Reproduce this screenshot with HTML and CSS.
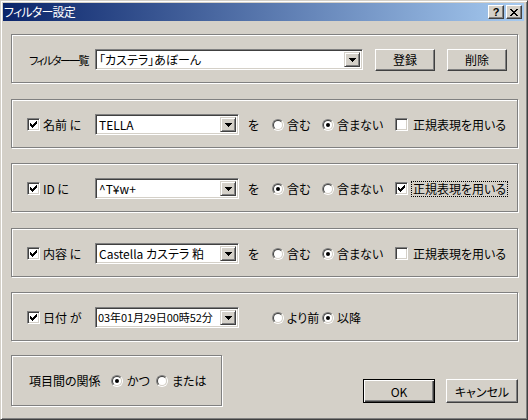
FILE: index.html
```html
<!DOCTYPE html>
<html lang="ja">
<head>
<meta charset="utf-8">
<title>フィルター設定</title>
<link rel="stylesheet" href="styles.css">
</head>
<body>
<div class="window">
  <div class="titlebar">
    <span class="title">フィルター設定</span>
    <span class="capbtn help">?</span>
    <span class="capbtn close"><svg width="8" height="7" viewBox="0 0 8 7"><path d="M0 0h2v1h-2z M6 0h2v1h-2z M1 1h2v1h-2z M5 1h2v1h-2z M2 2h4v1h-4z M3 3h2v1h-2z M2 4h4v1h-4z M1 5h2v1h-2z M5 5h2v1h-2z M0 6h2v1h-2z M6 6h2v1h-2z"/></svg></span>
  </div>
  <div class="client">
    <div class="group g-list">
      <span class="lbl list-lbl">フィルター一覧</span>
      <div class="combo list-combo"><span class="val">「カステラ」あぼーん</span><span class="drop"><svg width="7" height="4" viewBox="0 0 7 4"><path d="M0 0h7v1h-7z M1 1h5v1h-5z M2 2h3v1h-3z M3 3h1v1h-1z"/></svg></span></div>
      <span class="btn reg">登録</span>
      <span class="btn del">削除</span>
    </div>

    <div class="group row g-name">
      <span class="chk"><svg width="11" height="11" viewBox="1 1 11 11"><path d="M9 3h1v1h-1z M8 4h2v1h-2z M3 5h1v1h-1z M7 5h3v1h-3z M3 6h2v1h-2z M6 6h3v1h-3z M3 7h5v1h-5z M4 8h3v1h-3z M5 9h1v1h-1z"/></svg></span>
      <span class="lbl field-lbl">名前 に</span>
      <div class="combo field"><span class="val">TELLA</span><span class="drop"><svg width="7" height="4" viewBox="0 0 7 4"><path d="M0 0h7v1h-7z M1 1h5v1h-5z M2 2h3v1h-3z M3 3h1v1h-1z"/></svg></span></div>
      <span class="wo">を</span>
      <span class="opt o1"><span class="radio"><i></i></span>含む</span>
      <span class="opt o2"><span class="radio on"><i></i></span>含まない</span>
      <span class="chk empty"></span><span class="cap">正規表現を用いる</span>
    </div>

    <div class="group row g-id">
      <span class="chk"><svg width="11" height="11" viewBox="1 1 11 11"><path d="M9 3h1v1h-1z M8 4h2v1h-2z M3 5h1v1h-1z M7 5h3v1h-3z M3 6h2v1h-2z M6 6h3v1h-3z M3 7h5v1h-5z M4 8h3v1h-3z M5 9h1v1h-1z"/></svg></span>
      <span class="lbl field-lbl">ID に</span>
      <div class="combo field"><span class="val">^T¥w+</span><span class="drop"><svg width="7" height="4" viewBox="0 0 7 4"><path d="M0 0h7v1h-7z M1 1h5v1h-5z M2 2h3v1h-3z M3 3h1v1h-1z"/></svg></span></div>
      <span class="wo">を</span>
      <span class="opt o1"><span class="radio on"><i></i></span>含む</span>
      <span class="opt o2"><span class="radio"><i></i></span>含まない</span>
      <span class="chk"><svg width="11" height="11" viewBox="1 1 11 11"><path d="M9 3h1v1h-1z M8 4h2v1h-2z M3 5h1v1h-1z M7 5h3v1h-3z M3 6h2v1h-2z M6 6h3v1h-3z M3 7h5v1h-5z M4 8h3v1h-3z M5 9h1v1h-1z"/></svg></span><span class="cap focus">正規表現を用いる</span>
    </div>

    <div class="group row g-body">
      <span class="chk"><svg width="11" height="11" viewBox="1 1 11 11"><path d="M9 3h1v1h-1z M8 4h2v1h-2z M3 5h1v1h-1z M7 5h3v1h-3z M3 6h2v1h-2z M6 6h3v1h-3z M3 7h5v1h-5z M4 8h3v1h-3z M5 9h1v1h-1z"/></svg></span>
      <span class="lbl field-lbl">内容 に</span>
      <div class="combo field"><span class="val">Castella カステラ 粕</span><span class="drop"><svg width="7" height="4" viewBox="0 0 7 4"><path d="M0 0h7v1h-7z M1 1h5v1h-5z M2 2h3v1h-3z M3 3h1v1h-1z"/></svg></span></div>
      <span class="wo">を</span>
      <span class="opt o1"><span class="radio"><i></i></span>含む</span>
      <span class="opt o2"><span class="radio on"><i></i></span>含まない</span>
      <span class="chk empty"></span><span class="cap">正規表現を用いる</span>
    </div>

    <div class="group row g-date">
      <span class="chk"><svg width="11" height="11" viewBox="1 1 11 11"><path d="M9 3h1v1h-1z M8 4h2v1h-2z M3 5h1v1h-1z M7 5h3v1h-3z M3 6h2v1h-2z M6 6h3v1h-3z M3 7h5v1h-5z M4 8h3v1h-3z M5 9h1v1h-1z"/></svg></span>
      <span class="lbl field-lbl">日付 が</span>
      <div class="combo field date"><span class="val">03年01月29日00時52分</span><span class="drop"><svg width="7" height="4" viewBox="0 0 7 4"><path d="M0 0h7v1h-7z M1 1h5v1h-5z M2 2h3v1h-3z M3 3h1v1h-1z"/></svg></span></div>
      <span class="wo"></span>
      <span class="opt o1"><span class="radio"><i></i></span>より前</span>
      <span class="opt o2"><span class="radio on"><i></i></span>以降</span>
    </div>

    <div class="bottom">
      <div class="group g-rel">
        <span class="lbl rel-lbl">項目間の関係</span>
        <span class="opt r1"><span class="radio on"><i></i></span>かつ</span>
        <span class="opt r2"><span class="radio"><i></i></span>または</span>
      </div>
      <div class="actions">
        <span class="btn dlg default">OK</span>
        <span class="btn dlg">キャンセル</span>
      </div>
    </div>
  </div>
</div>
</body>
</html>
```

FILE: styles.css
```css
* { box-sizing: border-box; }
html, body { margin: 0; padding: 0; }
body {
  width: 528px;
  height: 420px;
  overflow: hidden;
  background: #d4d0c8;
  font-family: "Noto Sans CJK JP", "Noto Sans", sans-serif;
  font-size: 12px;
  font-feature-settings: "palt" 1;
  color: #000;
}
.window {
  width: 528px;
  height: 420px;
  background: #d4d0c8;
  border: 1px solid;
  border-color: #d4d0c8 #404040 #404040 #d4d0c8;
  box-shadow: inset 1px 1px 0 #fff, inset -1px -1px 0 #808080;
  padding: 2px 3px 3px 2px;
  display: flex;
  flex-direction: column;
}
.titlebar {
  height: 18px;
  flex-shrink: 0;
  display: flex;
  align-items: center;
  background: linear-gradient(to right, #0a246a, #a6caf0);
  padding: 0 2px 0 1px;
  color: #fff;
}
.title {
  flex: 1;
  line-height: 18px;
  white-space: nowrap;
  letter-spacing: -0.8px;
}
.capbtn {
  width: 16px;
  height: 14px;
  background: #d4d0c8;
  border: 1px solid;
  border-color: #fff #404040 #404040 #fff;
  box-shadow: inset -1px -1px 0 #808080;
  display: flex;
  align-items: center;
  justify-content: center;
  color: #000;
}
.help {
  margin-right: 2px;
  font-family: "Liberation Sans", sans-serif;
  font-weight: bold;
  font-size: 11px;
  line-height: 12px;
}
.close svg { display: block; margin-left: -1px; }

.client {
  flex: 1;
  display: flex;
  flex-direction: column;
  padding: 13px 0 0 8px;
}
.group {
  flex-shrink: 0;
  width: 507px;
  height: 49px;
  border: 1px solid #808080;
  box-shadow: inset 1px 1px 0 #fff, 1px 1px 0 #fff;
  display: flex;
  align-items: center;
  padding-top: 2px;
  white-space: nowrap;
}
.g-name { margin-top: 16px; }
.g-id { margin-top: 15px; }
.g-body { margin-top: 16px; }
.g-date { margin-top: 15px; }

.g-list { padding-left: 17px; }
.lbl { flex-shrink: 0; }
.list-lbl {
  width: 66px;
  font-size: 11px;
  letter-spacing: -1.6px;
}
.list-combo { width: 268px; }

.combo {
  height: 21px;
  flex-shrink: 0;
  background: #fff;
  border: 1px solid;
  border-color: #808080 #fff #fff #808080;
  box-shadow: inset 1px 1px 0 #404040, inset -1px -1px 0 #d4d0c8;
  padding: 2px;
  display: flex;
  align-items: center;
}
.combo .val {
  flex: 1;
  min-width: 0;
  padding-left: 1px;
  overflow: hidden;
  line-height: 15px;
}
.date .val {
  font-size: 11px;
  letter-spacing: -0.1px;
  padding-left: 0;
}
.drop {
  width: 16px;
  height: 15px;
  flex-shrink: 0;
  background: #d4d0c8;
  border: 1px solid;
  border-color: #d4d0c8 #404040 #404040 #d4d0c8;
  box-shadow: inset 1px 1px 0 #fff, inset -1px -1px 0 #808080;
  display: flex;
  align-items: center;
  justify-content: center;
}
.drop svg { display: block; }

.btn {
  flex-shrink: 0;
  height: 22px;
  width: 60px;
  background: #d4d0c8;
  border: 1px solid;
  border-color: #fff #404040 #404040 #fff;
  box-shadow: inset -1px -1px 0 #808080;
  display: flex;
  align-items: center;
  justify-content: center;
}
.reg { margin-left: 12px; }
.del { margin-left: 12px; }

.row { padding-left: 15px; }
.chk {
  width: 13px;
  height: 13px;
  flex-shrink: 0;
  background: #fff;
  border: 1px solid;
  border-color: #808080 #fff #fff #808080;
  box-shadow: inset 1px 1px 0 #404040, inset -1px -1px 0 #d4d0c8;
  margin-right: 3px;
}
.chk svg { display: block; }
.field-lbl { width: 52px; }
.field { width: 144px; }
.wo { width: 33px; padding-left: 9px; flex-shrink: 0; }
.opt { display: flex; align-items: center; flex-shrink: 0; }
.o1 { width: 50px; }
.o2 { width: 73px; }
.radio {
  width: 12px;
  height: 12px;
  flex-shrink: 0;
  border-radius: 50%;
  border: 1px solid;
  border-color: #808080 #fff #fff #808080;
  display: flex;
  align-items: center;
  justify-content: center;
  margin-right: 3px;
}
.radio i {
  width: 10px;
  height: 10px;
  border-radius: 50%;
  border: 1px solid;
  border-color: #404040 #d4d0c8 #d4d0c8 #404040;
  background: #fff;
  display: flex;
  align-items: center;
  justify-content: center;
}
.radio.on i::after {
  content: "";
  width: 4px;
  height: 4px;
  border-radius: 50%;
  background: #000;
}
.cap {
  border: 1px dotted transparent;
  padding: 0 1px;
  line-height: 14px;
}
.cap.focus { border-color: #000; }

.bottom {
  display: flex;
  width: 507px;
  margin-top: 14px;
}
.g-rel {
  width: 211px;
  height: 51px;
  padding: 0 0 0 17px;
}
.rel-lbl { width: 82px; }
.r1 { width: 45px; }
.r1 .radio, .r2 .radio { margin-right: 4px; }
.actions {
  flex: 1;
  display: flex;
  justify-content: flex-end;
  gap: 11px;
  padding-top: 24px;
}
.dlg { width: 72px; height: 24px; }
.default {
  border: 1px solid #000;
  box-shadow: inset 1px 1px 0 #fff, inset -1px -1px 0 #404040, inset -2px -2px 0 #808080;
}
```
